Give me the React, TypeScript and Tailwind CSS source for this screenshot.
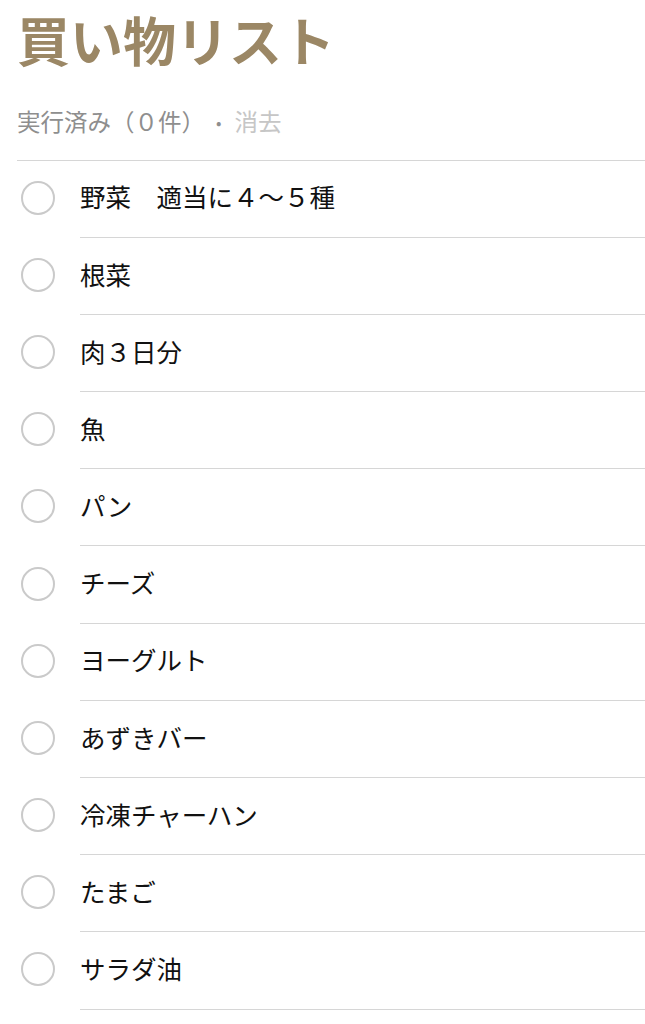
const ITEMS = [
  '野菜　適当に４〜５種',
  '根菜',
  '肉３日分',
  '魚',
  'パン',
  'チーズ',
  'ヨーグルト',
  'あずきバー',
  '冷凍チャーハン',
  'たまご',
  'サラダ油',
]

function ItemRow({ label }: { label: string }) {
  return (
    <li className="flex h-[77.2px] items-stretch">
      <div className="flex w-[63px] shrink-0 items-center pb-[3px]">
        <span className="ml-[4px] block h-[34px] w-[34px] rounded-full border-2 border-[#cacaca]" />
      </div>
      <div className="flex flex-1 items-center border-b border-[#d6d6d6] pb-[5px] text-[25.5px] leading-none text-[#111]">
        {label}
      </div>
    </li>
  )
}

export default function App() {
  return (
    <div
      className="min-h-screen bg-white pl-[17px]"
      style={{ fontFamily: '"Noto Sans CJK JP", "Noto Sans", sans-serif' }}
    >
      <h1 className="pt-[13px] text-[53px] font-bold leading-none text-[#9b8765]">
        買い物リスト
      </h1>
      <div className="mt-[44px] flex items-center border-b border-[#d6d6d6] pb-[26px] text-[23.5px] leading-none">
        <span className="text-[#8e8e8e]">実行済み（０件）</span>
        <span className="ml-[11px] text-[16px] text-[#8e8e8e]">•</span>
        <span className="ml-[13px] text-[#c6c6c6]">消去</span>
      </div>
      <ul>
        {ITEMS.map((item) => (
          <ItemRow key={item} label={item} />
        ))}
      </ul>
    </div>
  )
}
